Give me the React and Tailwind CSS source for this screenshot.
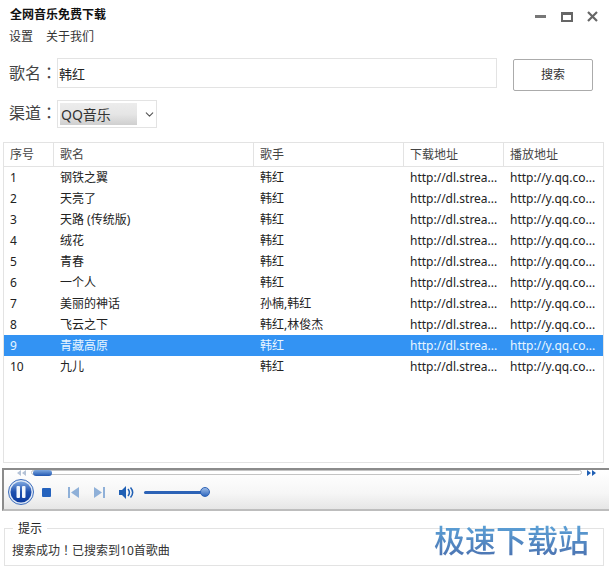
import { ChevronDown } from "lucide-react"

const FONT = "font-['Noto_Sans','Noto_Sans_CJK_SC',sans-serif]"
const PUNCT = "font-['Noto_Sans_CJK_TC',sans-serif]"

const ROWS = [
  ["1", "钢铁之翼", "韩红"],
  ["2", "天亮了", "韩红"],
  ["3", "天路 (传统版)", "韩红"],
  ["4", "绒花", "韩红"],
  ["5", "青春", "韩红"],
  ["6", "一个人", "韩红"],
  ["7", "美丽的神话", "孙楠,韩红"],
  ["8", "飞云之下", "韩红,林俊杰"],
  ["9", "青藏高原", "韩红"],
  ["10", "九儿", "韩红"],
]

const GRID = "grid grid-cols-[50px_200px_150px_100px_99px]"

function Header() {
  const cols = ["序号", "歌名", "歌手", "下载地址", "播放地址"]
  return (
    <div className={`${GRID} h-[24px] border-b border-[#e3e3e3] text-[#444]`}>
      {cols.map((c, i) => (
        <div key={c} className={`pl-[6px] leading-[24px] ${i < 4 ? "border-r border-[#e3e3e3]" : ""}`}>{c}</div>
      ))}
    </div>
  )
}

function Row({ row, selected }) {
  return (
    <div className={`${GRID} h-[21px] leading-[21px] ${selected ? "bg-[#3393f3] text-[#e8f6ff]" : "text-[#222]"}`}>
      <div className="pl-[6px]">{row[0]}</div>
      <div className="pl-[6px]">{row[1]}</div>
      <div className="pl-[6px]">{row[2]}</div>
      <div className="pl-[6px]">http://dl.strea...</div>
      <div className="pl-[6px]">http://y.qq.co...</div>
    </div>
  )
}

function Player() {
  return (
    <div className="ml-[2px] h-[43px] border-2 border-r-0 border-[#8b8b8b] border-b-[#bdbdbd] bg-gradient-to-b from-white via-[#f6f6f6] via-60% to-[#e6e6e6] flex flex-col">
      {/* seek bar */}
      <div className="flex items-center h-[5px] pl-[12px] pr-[12px] gap-[5px]">
        <svg width="10" height="6" viewBox="0 0 10 6"><path d="M5 0 1 3l4 3zM10 0 6 3l4 3z" fill="#b4c2d6" /></svg>
        <div className="relative flex-1 h-[5px] border border-[#c4c4c4] rounded-full bg-white">
          <div className="absolute left-[1px] top-[-1px] w-[19px] h-[6px] rounded-full bg-gradient-to-b from-[#7fa9e0] to-[#1f55b0]" />
        </div>
        <svg width="10" height="6" viewBox="0 0 10 6"><path d="M0 0l4 3-4 3zM5 0l4 3-4 3z" fill="#1f5fb4" /></svg>
      </div>
      {/* controls */}
      <div className="flex items-center h-[34px] pl-[4px]">
        <svg width="26" height="26" viewBox="0 0 26 26">
          <defs>
            <linearGradient id="pb" x1="0" y1="0" x2="0" y2="1">
              <stop offset="0" stopColor="#7fa8e0" />
              <stop offset="0.5" stopColor="#1d4fae" />
              <stop offset="1" stopColor="#0c3a9e" />
            </linearGradient>
          </defs>
          <circle cx="13" cy="13" r="12.5" fill="#dfe8f5" stroke="#3d6dbc" />
          <circle cx="13" cy="13" r="10.5" fill="url(#pb)" />
          <rect x="8.5" y="7" width="3.5" height="12" rx="1" fill="#f2f6fc" />
          <rect x="14" y="7" width="3.5" height="12" rx="1" fill="#f2f6fc" />
        </svg>
        <div className="w-[9px] h-[9px] ml-[8px] rounded-[1px] bg-[#2462bd]" />
        <svg className="ml-[17px]" width="12" height="11" viewBox="0 0 12 11"><rect width="2" height="11" fill="#8fb0d8" /><path d="M11 0v11L3 5.5z" fill="#8fb0d8" /></svg>
        <svg className="ml-[13px]" width="12" height="11" viewBox="0 0 12 11"><path d="M1 0v11l8-5.5z" fill="#8fb0d8" /><rect x="10" width="2" height="11" fill="#8fb0d8" /></svg>
        <svg className="ml-[14px]" width="16" height="13" viewBox="0 0 16 13">
          <path d="M0 4h3l4-4v13L3 9H0z" fill="#1f5fb4" />
          <path d="M9 3c1.6 2 1.6 5 0 7M11.5 1.5c2.6 3 2.6 7 0 10" fill="none" stroke="#1f5fb4" strokeWidth="1.5" />
        </svg>
        <div className="relative ml-[9px] w-[61px] h-[3px] rounded-full bg-[#2c62b6]">
          <div className="absolute right-[-5px] top-[-4px] w-[10px] h-[10px] rounded-full border border-[#2c62b6] bg-gradient-to-b from-[#9dbbe6] to-[#2f68bd]" />
        </div>
      </div>
    </div>
  )
}

export default function App() {
  return (
    <div className={`${FONT} relative w-[609px] h-[570px] overflow-hidden bg-white text-[12px] text-[#222]`}>
      {/* title bar */}
      <div className="flex items-start justify-between h-[28px]">
        <div className="pl-[10px] pt-[6px] font-bold leading-[17px] text-[#111]">全网音乐免费下载</div>
        <div className="flex items-center gap-[15px] pt-[11px] pr-[11px] text-[#666]">
          <div className="w-[11px] h-[3px] bg-[#777]" />
          <div className="w-[12px] h-[10px] border-2 border-t-[3px] border-[#666]" />
          <svg className="-ml-[1px]" width="11" height="11" viewBox="0 0 11 11">
            <path d="M1 1l9 9M10 1l-9 9" stroke="#666" strokeWidth="2.2" />
          </svg>
        </div>
      </div>
      {/* menu */}
      <div className="flex gap-[13px] pl-[9px] h-[17px] leading-[17px] text-[#333]">
        <span>设置</span>
        <span>关于我们</span>
      </div>
      {/* search */}
      <div className="flex items-start mt-[13px] pl-[9px]">
        <div className="w-[48px] pt-[2px] whitespace-nowrap text-[16px] leading-[24px] text-[#444]">歌名<span className={PUNCT}>：</span></div>
        <div className="w-[440px] h-[30px] border border-[#e3e3e3] pl-[1px] text-[13px] leading-[30px] text-[#222]">韩红</div>
        <button className="ml-[16px] mt-[1px] w-[80px] h-[32px] rounded-[2px] border border-[#ababab] bg-white text-[#333]">搜索</button>
      </div>
      {/* channel */}
      <div className="flex items-start mt-[9px] pl-[9px]">
        <div className="w-[48px] whitespace-nowrap text-[16px] leading-[24px] text-[#444]">渠道<span className={PUNCT}>：</span></div>
        <div className="flex items-center w-[100px] h-[28px] border border-[#e3e3e3] pl-[2px]">
          <div className="w-[77px] h-[22px] bg-gradient-to-b from-[#ececec] via-[#e6e6e6] to-[#cfcfcf] pl-[1px] text-[14px] leading-[24px] text-[#333]">QQ音乐</div>
          <ChevronDown className="ml-[6px] text-[#555]" size={13} />
        </div>
      </div>
      {/* table */}
      <div className="mt-[14px] mx-[3px] w-[601px] h-[321px] border border-[#e3e3e3] text-[12px]">
        <Header />
        {ROWS.map((r, i) => (
          <Row key={r[0]} row={r} selected={i === 8} />
        ))}
      </div>
      {/* player */}
      <div className="mt-[5px]">
        <Player />
      </div>
      {/* message box */}
      <div className="relative mt-[17px] mx-[4px] w-[600px] h-[38px] border border-[#e3e3e3] pl-[7px] pt-[12px] leading-[18px] text-[#333]">
        <span className="absolute left-[8px] top-[-9px] bg-white px-[5px] leading-[17px] text-[#222]">提示</span>
        搜索成功<span className={PUNCT}>！</span>已搜索到10首歌曲
      </div>
      {/* watermark */}
      <div className="absolute left-[434px] top-[520px] bg-gradient-to-b from-[#5ea8dc] to-[#4a6fae] bg-clip-text text-[31px] font-medium leading-[40px] text-transparent">极速下载站</div>
    </div>
  )
}
